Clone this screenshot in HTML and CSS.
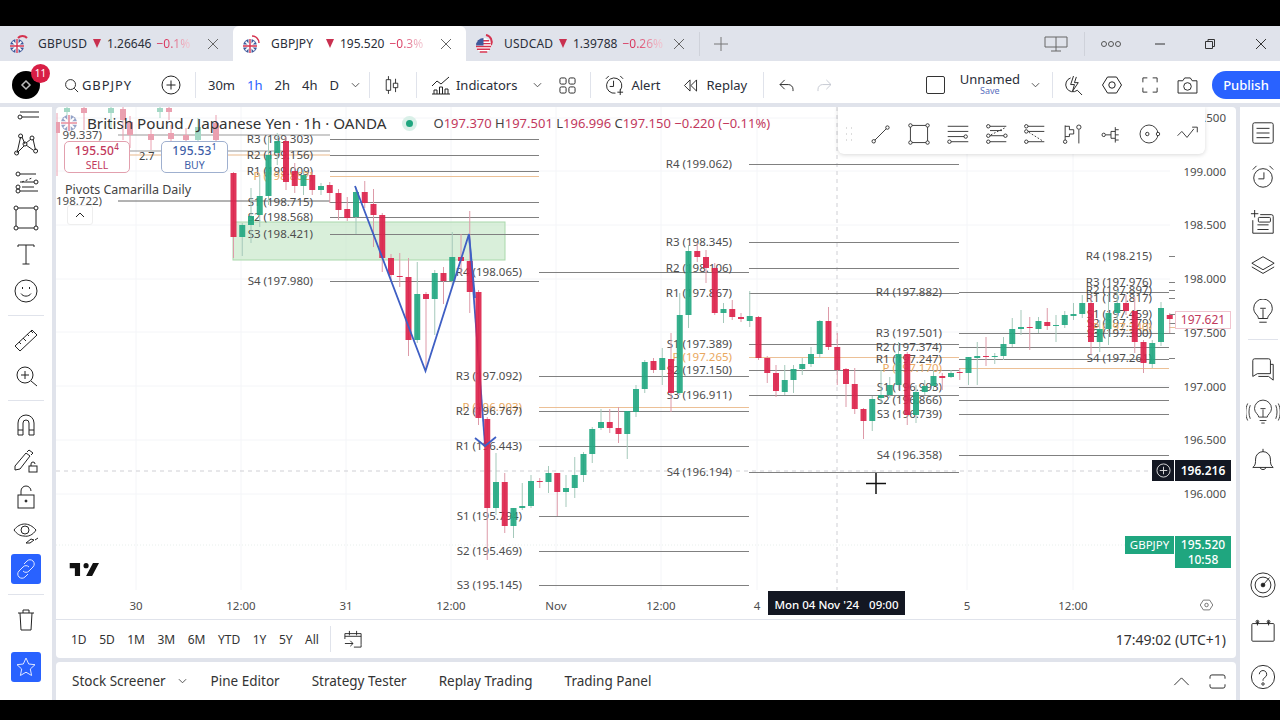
FILE: index.html
```html
<!DOCTYPE html>
<html lang="en">
<head>
    <meta charset="UTF-8">
    <title>GBPJPY 195.520</title>
    <link rel="stylesheet" href="styles.css">
</head>
<body>
    <!-- shared flags -->
    <svg class="defs" width="0" height="0">
        <symbol id="flagUk" viewBox="0 0 16 16">
            <circle cx="8" cy="8" r="8" fill="#3f5a9c"/>
            <path d="M3 3l10 10M13 3L3 13" stroke="#fff" stroke-width="2"/>
            <path d="M8 0v16M0 8h16" stroke="#fff" stroke-width="3.5"/>
            <path d="M8 0v16M0 8h16" stroke="#d5334f" stroke-width="1.6"/>
        </symbol>
        <symbol id="flagUs" viewBox="0 0 16 16">
            <circle cx="8" cy="8" r="8" fill="#fff"/>
            <path d="M2 3h12M0.500 6h15M0 9h16M1 12h14M4 15h8" stroke="#d5334f" stroke-width="1.500"/>
            <path d="M8 0a8 8 0 0 0-8 8h8z" fill="#3f5a9c"/>
        </symbol>
    </svg>

    <div class="black-bar"></div>

    <div class="tabs">
        <div class="tab">
            <svg class="flags" viewBox="0 0 20 20"><path d="M9 4a6 6 0 0 1 9 0" fill="none" stroke="#d5334f" stroke-width="2"/><use href="#flagUk" x="1" y="5" width="14" height="14"/></svg>
            <span class="sym">GBPUSD</span><span class="arrow"></span><span>1.26646</span><span class="chg">−0.1%</span>
            <svg class="close" viewBox="0 0 12 12"><path d="M1 1l10 10M11 1L1 11"/></svg>
        </div>
        <div class="tab active">
            <svg class="flags" viewBox="0 0 20 20"><path d="M10 2a7 7 0 0 1 7 7" fill="none" stroke="#d5334f" stroke-width="1.500"/><use href="#flagUk" x="1" y="5" width="14" height="14"/></svg>
            <span class="sym">GBPJPY</span><span class="arrow"></span><span>195.520</span><span class="chg">−0.3%</span>
            <svg class="close" viewBox="0 0 12 12"><path d="M1 1l10 10M11 1L1 11"/></svg>
        </div>
        <div class="tab">
            <svg class="flags" viewBox="0 0 20 20"><path d="M11 1a7 7 0 0 1 5 10" fill="none" stroke="#d5334f" stroke-width="2"/><use href="#flagUs" x="1" y="4" width="15" height="15"/></svg>
            <span class="sym">USDCAD</span><span class="arrow"></span><span>1.39788</span><span class="chg">−0.26%</span>
            <svg class="close" viewBox="0 0 12 12"><path d="M1 1l10 10M11 1L1 11"/></svg>
        </div>
        <div class="tab-sep"></div>
        <svg class="new-tab" viewBox="0 0 14 14"><path d="M7 0v14M0 7h14"/></svg>
        <div class="window-btns">
            <svg class="win split" viewBox="0 0 24 16"><path d="M1 1h22v10H1zM12 1v14M7 15h10"/></svg>
            <div class="tab-sep win-sep"></div>
            <svg class="win dots" viewBox="0 0 22 8"><circle cx="4" cy="4" r="2.500"/><circle cx="11" cy="4" r="2.500"/><circle cx="18" cy="4" r="2.500"/></svg>
            <svg class="win minimize" viewBox="0 0 12 12"><path d="M1 6h10"/></svg>
            <svg class="win restore" viewBox="0 0 12 12"><path d="M1.500 3.500h7v7h-7zM4 3.500v-2h6.500v7h-2"/></svg>
            <svg class="win shut" viewBox="0 0 12 12"><path d="M1 1l10 10M11 1L1 11"/></svg>
        </div>
    </div>

    <div class="toolbar">
        <div class="avatar">
            <svg viewBox="0 0 12 12"><path d="M6 2l4 4-4 4-4-4z" fill="none" stroke="#bbb" stroke-width="1.500"/></svg>
            <span class="badge">11</span>
        </div>
        <div class="symbol">
            <svg viewBox="0 0 16 16"><circle cx="7" cy="7" r="5.300"/><path d="M11 11l4 4"/></svg>
            <span>GBPJPY</span>
        </div>
        <svg class="tb-icon plus" viewBox="0 0 20 20"><circle cx="10" cy="10" r="9"/><path d="M10 5.500v9M5.500 10h9"/></svg>
        <div class="sep sep-a"></div>
        <div class="intervals">
            <span>30m</span><span class="on">1h</span><span>2h</span><span>4h</span><span>D</span>
            <svg class="chev" viewBox="0 0 10 6"><path d="M1 1l4 4 4-4"/></svg>
        </div>
        <div class="sep sep-b"></div>
        <svg class="tb-icon bars" viewBox="0 0 18 22"><path d="M5 1v4M5 17v4M2.500 5h5v12h-5zM13 4v5M13 14v5M10.500 9h5v5h-5z"/></svg>
        <div class="sep sep-c"></div>
        <div class="tb-btn indicators">
            <svg viewBox="0 0 20 20"><path d="M1 11l5-5 4 3 8-7M1 19h18M3 19v-4h3v4M8.500 19v-7h3v7M14 19v-5h3v5"/></svg>
            <span>Indicators</span>
        </div>
        <svg class="chev chev-ind" viewBox="0 0 10 6"><path d="M1 1l4 4 4-4"/></svg>
        <svg class="tb-icon layout" viewBox="0 0 18 18"><rect x="1" y="1" width="6.500" height="6.500" rx="1.500"/><rect x="10.500" y="1" width="6.500" height="6.500" rx="1.500"/><rect x="1" y="10.500" width="6.500" height="6.500" rx="1.500"/><rect x="10.500" y="10.500" width="6.500" height="6.500" rx="1.500"/></svg>
        <div class="sep sep-d"></div>
        <div class="tb-btn alert">
            <svg viewBox="0 0 22 22"><path d="M17 16a8 8 0 1 0-5 3M10 6v6H6M2 4l3-3M17 1l3 3M17 15v6M14 18h6"/></svg>
            <span>Alert</span>
        </div>
        <div class="tb-btn replay">
            <svg viewBox="0 0 16 14"><path d="M7.500 1L1.500 7l6 6zM14.500 1l-6 6 6 6z"/></svg>
            <span>Replay</span>
        </div>
        <div class="sep sep-e"></div>
        <svg class="tb-icon undo" viewBox="0 0 16 14"><path d="M6 1L1 6l5 5M1 6h9a5 5 0 0 1 5 5v2"/></svg>
        <svg class="tb-icon redo" viewBox="0 0 16 14"><path d="M10 1l5 5-5 5M15 6H6a5 5 0 0 0-5 5v2"/></svg>

        <div class="tb-right">
            <div class="check"></div>
            <div class="layout-name"><span>Unnamed</span><small>Save</small></div>
            <svg class="chev chev-name" viewBox="0 0 10 6"><path d="M1 1l4 4 4-4"/></svg>
            <div class="sep sep-f"></div>
            <svg class="tb-icon flash" viewBox="0 0 20 22"><path d="M7 3a7.500 7.500 0 1 0 7 13l5 5M10 1L7 10h4l-2 7 6-9h-4l2-6"/></svg>
            <svg class="tb-icon hex" viewBox="0 0 20 20"><path d="M5.500 2h9l5 8-5 8h-9l-5-8z"/><circle cx="10" cy="10" r="3.200"/></svg>
            <svg class="tb-icon full" viewBox="0 0 18 18"><path d="M1 6V1h5M12 1h5v5M17 12v5h-5M6 17H1v-5"/></svg>
            <svg class="tb-icon camera" viewBox="0 0 22 18"><path d="M1 4h5l2-3h6l2 3h5v13H1z"/><circle cx="11" cy="10" r="4"/></svg>
            <button class="publish">Publish</button>
        </div>
    </div>

    <div class="workspace">
        <div class="left-bar">
            <div class="tool first"><svg viewBox="0 0 28 28"><path d="M8 9h19M10 14h17"/><circle cx="8" cy="14" r="2"/></svg></div>
            <div class="tool"><svg viewBox="0 0 28 28"><path d="M5 22L8.600 6M10 6l3 7M14 12l5-4M21 8l2.500 11M21 19l-7-5M12 15l-6 6"/><circle cx="8.600" cy="5" r="2"/><circle cx="20" cy="7" r="2"/><circle cx="13" cy="13" r="2"/><circle cx="23.600" cy="20" r="2"/><circle cx="4.600" cy="22" r="2"/></svg></div>
            <div class="tool wide"><svg viewBox="0 0 28 28"><path d="M8 6h16M10 19h12M8 23h18"/><path d="M10 14l10-4" stroke-dasharray="2 2"/><circle cx="6" cy="6" r="2"/><circle cx="6" cy="19" r="2"/><circle cx="24" cy="14" r="2"/><circle cx="6" cy="23" r="2"/><path d="M8 14h14"/></svg></div>
            <div class="tool slim"><svg viewBox="0 0 28 28"><path d="M6 4h16M24 6v16M6 24h16M4 6v16"/><circle cx="4" cy="4" r="2"/><circle cx="24" cy="4" r="2"/><circle cx="4" cy="24" r="2"/><circle cx="24" cy="24" r="2"/></svg></div>
            <div class="tool wide"><svg viewBox="0 0 28 28"><path d="M6 7V5h16v2M14 5v19M10.500 24h7"/></svg></div>
            <div class="tool wide"><svg viewBox="0 0 28 28"><circle cx="14" cy="14" r="11"/><path d="M9 16.500c2 3.500 8 3.500 10 0"/><path d="M10.500 10v2M17.500 10v2"/></svg></div>
            <div class="tool-line line-a"></div>
            <div class="tool"><svg viewBox="0 0 28 28"><path d="M3 20L20 4l5 5L8 25zM7 16l2 2M11 12l3 3M15 8l2 2M19 5l2 2"/></svg></div>
            <div class="tool"><svg viewBox="0 0 28 28"><circle cx="13" cy="13" r="8"/><path d="M19 19l6 5M13 9v8M9 13h8"/></svg></div>
            <div class="tool-line line-a"></div>
            <div class="tool"><svg viewBox="0 0 28 28"><path d="M6 24V12a8 8 0 0 1 16 0v12h-5V12a3 3 0 0 0-6 0v12zM6 19h5M17 19h5"/></svg></div>
            <div class="tool"><svg viewBox="0 0 28 28"><path d="M3 19L14 6l4 3L8 22l-5 1zM15 5l2-2 4 3-2 2"/><rect x="17" y="19" width="8" height="6"/><path d="M19 19v-2a2 2 0 0 1 4 0"/></svg></div>
            <div class="tool"><svg viewBox="0 0 28 28"><rect x="6" y="12" width="16" height="13"/><path d="M9 12V8a5 5 0 0 1 10 0"/><circle cx="14" cy="18" r="1" fill="#222"/></svg></div>
            <div class="tool"><svg viewBox="0 0 28 28"><path d="M2 11c6-8 15-8 22 0-3 5-8 7-12 6-4 0-7-2-10-6z"/><circle cx="13" cy="11" r="4"/><path d="M14 24l5-4 3 1-4 3zM23 21l3-2"/></svg></div>
            <div class="tool"><span class="blue-tool"><svg viewBox="0 0 22 22"><path d="M9 6l3-3a4 4 0 0 1 6 6l-4 4a4 4 0 0 1-6 0M13 16l-3 3a4 4 0 0 1-6-6l4-4a4 4 0 0 1 6 0"/></svg></span></div>
            <div class="tool-line line-b"></div>
            <div class="tool"><svg viewBox="0 0 28 28"><path d="M6 8h16M11 8V5h6v3M8 8l1 17h10l1-17"/></svg></div>
            <div class="tool star-tool"><span class="blue-tool"><svg viewBox="0 0 22 22"><path d="M11 2l2.700 6 6.300.700-4.700 4.300 1.300 6.500-5.600-3.300-5.600 3.300 1.300-6.500L2 8.700 8.300 8z"/></svg></span></div>
        </div>

        <div class="center">
            <div class="chart-panel">
                <div class="chart">
                    <svg id="chartSvg" viewBox="56 107 1180 512" width="1180" height="512"></svg>

                    <div class="legend">
                        <svg class="legend-flag" viewBox="0 0 16 16"><use href="#flagUk"/></svg>
                        <span class="legend-title">British Pound / Japanese Yen · 1h · OANDA</span>
                        <span class="live-dot"></span>
                        <span class="ohlc">
                            O<b>197.370</b> H<b>197.501</b> L<b>196.996</b> C<b>197.150</b> <b>−0.220 (−0.11%)</b>
                        </span>
                    </div>
                    <div class="quote sell"><strong>195.50<sup>4</sup></strong><span>SELL</span></div>
                    <div class="spread">2.7</div>
                    <div class="quote buy"><strong>195.53<sup>1</sup></strong><span>BUY</span></div>
                    <div class="study">Pivots Camarilla Daily</div>
                    <div class="collapse"><svg viewBox="0 0 10 6"><path d="M1 5l4-4 4 4"/></svg></div>

                    <svg class="tv-logo" viewBox="0 6 36 15"><path d="M14 6H2v6h6v9h6V6zm14 15h-7l8-15h7l-8 15zm-7-9a3 3 0 1 0 0-6 3 3 0 0 0 0 6z"/></svg>

                    <div class="draw-bar">
                        <svg class="grip" viewBox="0 0 10 16"><path d="M2 2h1M7 2h1M2 8h1M7 8h1M2 14h1M7 14h1"/></svg>
                        <svg viewBox="0 0 28 28"><path d="M7 21L20 8"/><circle cx="5.500" cy="22.500" r="2"/><circle cx="21.500" cy="6.500" r="2"/></svg>
                        <svg viewBox="0 0 28 28"><path d="M6 4h16M24 6v16M6 24h16M4 6v16"/><circle cx="4" cy="4" r="2"/><circle cx="24" cy="4" r="2"/><circle cx="4" cy="24" r="2"/><circle cx="24" cy="24" r="2"/></svg>
                        <svg viewBox="0 0 28 28"><path d="M2 5h24M2 11h24M2 17h19M6 23h20"/><circle cx="23" cy="17" r="2"/><circle cx="4" cy="23" r="2"/></svg>
                        <svg viewBox="0 0 28 28"><path d="M7 5h19M7 16h16M7 23h19"/><path d="M8 15L24 7" stroke-dasharray="2 2"/><circle cx="5" cy="5" r="2"/><circle cx="5" cy="16" r="2"/><circle cx="25" cy="16" r="2"/><circle cx="5" cy="23" r="2"/><path d="M7 10h14"/></svg>
                        <svg viewBox="0 0 28 28"><path d="M7 5h19M7 11h19M7 23h19"/><path d="M8 12l16 10" stroke-dasharray="2 2"/><circle cx="5" cy="5" r="2"/><circle cx="5" cy="11" r="2"/><circle cx="5" cy="23" r="2"/></svg>
                        <svg viewBox="0 0 28 28"><path d="M6 4v17M6 5h5v4h5v5h-5v3H6M22 9v16"/><circle cx="6" cy="23" r="2"/><circle cx="22" cy="6" r="2.500"/></svg>
                        <svg viewBox="0 0 28 28"><path d="M8 15h6M14 11h5M14 19h5M14 11v8M19 6v18M19 9h4M19 21h4M19 15h4"/><circle cx="5.500" cy="15" r="2"/></svg>
                        <svg viewBox="0 0 28 28"><circle cx="14" cy="14" r="10.500"/><circle cx="12" cy="14" r="2"/><circle cx="24.500" cy="14" r="2" fill="#fff"/></svg>
                        <svg viewBox="0 0 28 28"><path d="M3 16l5-5 6 7 8-10"/><path d="M20 6h6v6"/></svg>
                    </div>

                    <!-- price scale tags -->
                    <div class="tag last-close">197.621</div>
                    <div class="tag cross-plus"><svg viewBox="0 0 16 16"><circle cx="8" cy="8" r="7"/><path d="M8 4v8M4 8h8"/></svg></div>
                    <div class="tag cross-price">196.216</div>
                    <div class="tag sym-tag">GBPJPY</div>
                    <div class="tag price-tag">195.520<br>10:58</div>
                    <div class="time-tip">Mon 04 Nov '24<span>09:00</span></div>
                    <svg class="axis-gear" viewBox="0 0 20 20"><path d="M5.500 3h9l4.500 7-4.500 7h-9L1 10z"/><circle cx="10" cy="10" r="2.500"/></svg>
                </div>

                <div class="ranges">
                    <span>1D</span><span>5D</span><span>1M</span><span>3M</span><span>6M</span><span>YTD</span><span>1Y</span><span>5Y</span><span>All</span>
                    <div class="range-sep"></div>
                    <svg viewBox="0 0 20 20"><path d="M19 16V4H1v6M1 7h18M6 1v5M14 1v5M11 19h8v-3M1 15h9M7 12l3 3-3 3"/></svg>
                    <div class="clock">17:49:02 (UTC+1)</div>
                </div>
            </div>

            <div class="bottom-panel">
                <span class="panel-tab screener">Stock Screener</span>
                <svg class="chev" viewBox="0 0 10 6"><path d="M1 1l4 4 4-4"/></svg>
                <span class="panel-tab pine">Pine Editor</span>
                <span class="panel-tab">Strategy Tester</span>
                <span class="panel-tab">Replay Trading</span>
                <span class="panel-tab">Trading Panel</span>
                <svg class="panel-up" viewBox="0 0 18 10"><path d="M1 9l8-8 8 8"/></svg>
                <svg class="panel-max" viewBox="0 0 18 16"><path d="M1 5V3a2 2 0 0 1 2-2h12a2 2 0 0 1 2 2v2M1 11v2a2 2 0 0 0 2 2h12a2 2 0 0 0 2-2v-2"/></svg>
            </div>
        </div>

        <div class="right-bar">
            <div></div>
            <svg viewBox="0 0 28 28"><rect x="3" y="3" width="22" height="22" rx="2"/><path d="M7 9h14M7 14h14M7 19h14"/></svg>
            <svg viewBox="0 0 28 28"><circle cx="14" cy="15" r="10"/><path d="M15 9v7H9M3 6l4-4M25 6l-4-4"/></svg>
            <svg viewBox="0 0 28 28"><path d="M1 4h8M5 0v8M3 11v14h22V7a2 2 0 0 0-2-2H11M8 16h12M8 21h12"/><rect x="9" y="8" width="13" height="5" rx="1"/></svg>
            <svg viewBox="0 0 28 28"><path d="M14 4l12 7-12 7-12-7zM2 15l12 7 12-7"/></svg>
            <svg viewBox="0 0 28 28"><path d="M9 21c0-4-5-5-5-11a10 10 0 0 1 20 0c0 6-5 7-5 11zM10 25h8M14 11v10M11 10h6"/></svg>
            <div class="right-line"></div>
            <svg viewBox="0 0 28 28"><path d="M3 5a2 2 0 0 1 2-2h15a2 2 0 0 1 2 2v14H8l-5 3zM22 9h3v17l-5-4H9"/></svg>
            <svg class="wide-icon" viewBox="0 0 40 28"><path d="M15 20c0-3-5-5-5-10a10 10 0 0 1 20 0c0 5-5 7-5 10zM16 24h8M18 27h4M20 11v9M17 10h6M5 6c-2 5-2 11 0 16M2 4c-3 6-3 14 0 20M35 6c2 5 2 11 0 16M38 4c3 6 3 14 0 20"/></svg>
            <svg viewBox="0 0 28 28"><path d="M3 22c3-2 3-5 3-9a8 8 0 0 1 16 0c0 4 0 7 3 9zM14 2v3M11 22c0 3 6 3 6 0"/></svg>
            <div></div>
            <svg viewBox="0 0 28 28"><circle cx="14" cy="14" r="13"/><circle cx="14" cy="14" r="8.500"/><circle cx="14" cy="14" r="2" fill="#222"/><path d="M14 14l7-8"/></svg>
            <svg viewBox="0 0 28 28"><rect x="2" y="6" width="24" height="19" rx="1"/><path d="M8 3v5M20 3v5"/><circle cx="8" cy="4" r="1.500"/><circle cx="20" cy="4" r="1.500"/></svg>
            <svg viewBox="0 0 28 28"><circle cx="14" cy="14" r="12.500"/><path d="M10 11a4 4 0 1 1 6 3.500c-1.500 1-2 1.500-2 3.500"/><circle cx="14" cy="21.500" r="1.300"/></svg>
            <div></div>
        </div>
    </div>

    <div class="black-bar bottom"></div>

    <script src="script.js"></script>
</body>
</html>
```
FILE: styles.css
```css
* {
    box-sizing: border-box;
}

body {
    margin: 0;
    width: 1280px;
    height: 720px;
    overflow: hidden;
    font-family: "Noto Sans", Arial, sans-serif;
    color: #2a2e39;
    background: #e0e3eb;
}

svg {
    fill: none;
    stroke: #222;
    stroke-width: 1;
    flex-shrink: 0;
}

.defs {
    position: absolute;
}

.black-bar {
    height: 26px;
    background: #000;
}

.black-bar.bottom {
    height: 20px;
}

/* Browser style tabs */
.tabs {
    height: 35px;
    display: flex;
    align-items: center;
    background: #e0e3eb;
    font-size: 12px;
    color: #2a2e39;
}

.tab {
    width: 233px;
    height: 35px;
    display: flex;
    align-items: center;
    padding-left: 9px;
    border-radius: 6px 6px 0 0;
}

.tab.active {
    background: #fff;
}

.flags {
    width: 20px;
    height: 20px;
    stroke: none;
}

.sym {
    width: 50px;
    margin-left: 9px;
    letter-spacing: .2px;
}

.arrow {
    width: 0;
    height: 0;
    margin: 0 6px 0 5px;
    border-left: 4px solid transparent;
    border-right: 4px solid transparent;
    border-top: 9px solid #c9304f;
}

.chg {
    margin-left: 5px;
    background: linear-gradient(90deg, #d8325a 30%, #f0c0cc 90%);
    -webkit-background-clip: text;
    background-clip: text;
    color: transparent;
}

.close {
    width: 12px;
    height: 12px;
    margin-left: auto;
    margin-right: 14px;
    stroke: #666;
}

.tab-sep {
    width: 1px;
    height: 24px;
    background: #cfd2da;
}

.new-tab {
    width: 14px;
    height: 14px;
    margin-left: 14px;
    stroke: #777;
}

.window-btns {
    margin-left: auto;
    display: flex;
    align-items: center;
}

.win {
    stroke: #333;
}

.split {
    width: 24px;
    height: 16px;
    stroke: #666;
    margin-right: 16px;
}

.win-sep {
    margin-right: 15px;
}

.dots {
    width: 22px;
    height: 8px;
    margin-right: 32px;
    stroke: #555;
}

.minimize {
    width: 12px;
    height: 12px;
    margin-right: 38px;
}

.restore {
    width: 12px;
    height: 12px;
    margin-right: 39px;
}

.shut {
    width: 12px;
    height: 12px;
    margin-right: 13px;
}

/* Main toolbar */
.toolbar {
    height: 42px;
    padding-top: 6px;
    display: flex;
    align-items: center;
    background: #fff;
    font-size: 13px;
    position: relative;
}

.avatar {
    width: 28px;
    height: 28px;
    margin-left: 12px;
    border-radius: 50%;
    background: #000;
    position: relative;
    display: flex;
    align-items: center;
    justify-content: center;
}

.avatar svg {
    width: 12px;
    height: 12px;
}

.badge {
    position: absolute;
    top: -7px;
    right: -10px;
    width: 19px;
    height: 19px;
    border-radius: 50%;
    background: #d81e45;
    color: #fff;
    font-size: 10px;
    line-height: 19px;
    text-align: center;
}

.symbol {
    display: flex;
    align-items: center;
    gap: 3px;
    margin-left: 24px;
    letter-spacing: .9px;
}

.symbol svg {
    width: 15px;
    height: 15px;
}

.tb-icon {
    flex-shrink: 0;
}

.plus {
    width: 20px;
    height: 20px;
    margin-left: 29px;
}

.sep {
    width: 1px;
    height: 26px;
    background: #e0e3eb;
}

.sep-a {
    margin-left: 14px;
}

.intervals {
    display: flex;
    align-items: center;
    gap: 12px;
    margin-left: 12px;
}

.intervals .on {
    color: #2962ff;
}

.chev {
    width: 9px;
    height: 6px;
    stroke: #444;
}

.sep-b {
    margin-left: 9px;
}

.bars {
    width: 16px;
    height: 20px;
    margin-left: 14px;
}

.sep-c {
    margin-left: 16px;
}

.tb-btn {
    display: flex;
    align-items: center;
}

.indicators {
    margin-left: 14px;
    gap: 5px;
}

.indicators svg {
    width: 20px;
    height: 20px;
}

.chev-ind {
    margin-left: 16px;
}

.layout {
    width: 17px;
    height: 17px;
    margin-left: 17px;
}

.sep-d {
    margin-left: 14px;
}

.alert {
    margin-left: 13px;
    gap: 6px;
}

.alert svg {
    width: 21px;
    height: 21px;
}

.replay {
    margin-left: 23px;
    gap: 8px;
}

.replay svg {
    width: 15px;
    height: 13px;
}

.sep-e {
    margin-left: 16px;
}

.undo {
    width: 15px;
    height: 13px;
    margin-left: 15px;
}

.redo {
    width: 15px;
    height: 13px;
    margin-left: 23px;
    stroke: #c4c7d0;
}

.tb-right {
    margin-left: auto;
    display: flex;
    align-items: center;
}

.check {
    width: 19px;
    height: 18px;
    border: 1px solid #333;
    border-radius: 2px;
}

.layout-name {
    margin-left: 15px;
    display: flex;
    flex-direction: column;
    align-items: center;
    line-height: 12px;
}

.layout-name small {
    font-size: 9px;
    color: #5a6fc0;
}

.chev-name {
    margin-left: 11px;
}

.sep-f {
    margin-left: 12px;
}

.flash {
    width: 19px;
    height: 21px;
    margin-left: 11px;
}

.hex {
    width: 20px;
    height: 20px;
    margin-left: 19px;
}

.full {
    width: 16px;
    height: 16px;
    margin-left: 20px;
}

.camera {
    width: 21px;
    height: 17px;
    margin-left: 19px;
}

.publish {
    width: 68px;
    height: 28px;
    margin-left: 14px;
    border: none;
    border-radius: 14px 0 0 14px;
    background: #2962ff;
    color: #fff;
    font-family: inherit;
    font-size: 13px;
    font-weight: 500;
}

/* Everything under the toolbar */
.workspace {
    height: 597px;
    padding-top: 4px;
    display: flex;
    background: #e0e3eb;
}

.left-bar {
    width: 52px;
    height: 593px;
    background: #fff;
    overflow: hidden;
}

.tool {
    height: 36px;
    display: flex;
    align-items: center;
    justify-content: center;
}

.tool svg {
    width: 28px;
    height: 28px;
}

.tool.first {
    height: 20px;
}

.tool.wide {
    height: 37px;
}

.tool.slim {
    height: 35px;
}

.tool-line {
    height: 1px;
    margin: 6px 8px;
    background: #e0e3eb;
}

.tool-line.line-b {
    margin: 7px 8px 6px;
}

.star-tool {
    margin-top: 12px;
}

.blue-tool {
    width: 30px;
    height: 30px;
    border-radius: 3px;
    background: #2962ff;
    display: flex;
    align-items: center;
    justify-content: center;
}

.tool .blue-tool svg {
    width: 22px;
    height: 22px;
    stroke: #dfe7ff;
}

.center {
    width: 1180px;
    margin-left: 4px;
    display: flex;
    flex-direction: column;
    gap: 4px;
}

.chart-panel {
    height: 551px;
    background: #fff;
    border-radius: 4px;
    display: flex;
    flex-direction: column;
}

.chart {
    height: 512px;
    position: relative;
    overflow: hidden;
}

#chartSvg {
    display: block;
    stroke: none;
}

#chartSvg text {
    font-size: 11.500px;
    fill: #4d4d4d;
    stroke: none;
}

#chartSvg rect.candle {
    opacity: .9;
}

.legend {
    position: absolute;
    top: 5px;
    left: 5px;
    display: flex;
    align-items: center;
    height: 22px;
}

.legend-flag {
    width: 16px;
    height: 16px;
    stroke: none;
    opacity: .55;
}

.legend-title {
    margin-left: 10px;
    font-size: 15.200px;
    color: #333;
}

.live-dot {
    width: 7px;
    height: 7px;
    margin-left: 20px;
    border-radius: 50%;
    background: #1fa67f;
    box-shadow: 0 0 0 4px #d9f0e8;
}

.ohlc {
    margin-left: 20px;
    font-size: 13px;
    color: #444;
}

.ohlc b {
    font-weight: 400;
    color: #c2395d;
}

.quote {
    position: absolute;
    top: 34px;
    height: 32px;
    border: 1px solid #e2a0ae;
    border-radius: 5px;
    background: #fff;
    display: flex;
    flex-direction: column;
    align-items: center;
    font-size: 12px;
    line-height: 14px;
    padding-top: 2px;
    color: #c2395d;
}

.quote strong {
    font-weight: 500;
    letter-spacing: .3px;
}

.quote sup {
    font-size: 8px;
    line-height: 0;
}

.quote span {
    font-size: 10.500px;
}

.sell {
    left: 8px;
    width: 66px;
}

.buy {
    left: 105px;
    width: 67px;
    border-color: #9fb0cf;
    color: #3f5fa8;
}

.spread {
    position: absolute;
    top: 41px;
    left: 83px;
    font-size: 11px;
    color: #444;
}

.study {
    position: absolute;
    top: 74px;
    left: 9px;
    font-size: 12.500px;
    color: #444;
}

.collapse {
    position: absolute;
    top: 98px;
    left: 11px;
    width: 26px;
    height: 20px;
    border: 1px solid #eee;
    border-radius: 3px;
    background: rgba(255, 255, 255, .7);
    display: flex;
    align-items: center;
    justify-content: center;
}

.collapse svg {
    width: 10px;
    height: 6px;
}

.tv-logo {
    position: absolute;
    left: 12px;
    top: 455px;
    width: 31px;
    height: 15px;
    fill: #111;
    stroke: none;
}

/* Floating favourite drawings */
.draw-bar {
    position: absolute;
    top: 0;
    left: 782px;
    width: 367px;
    height: 47px;
    padding: 6px 0 0 6px;
    display: flex;
    align-items: center;
    background: #fff;
    border-radius: 0 0 6px 6px;
    box-shadow: 0 1px 4px rgba(0, 0, 0, .15);
}

.draw-bar svg {
    width: 24px;
    height: 24px;
    margin-right: 14.250px;
}

.draw-bar .grip {
    width: 10px;
    height: 16px;
    margin-right: 15px;
    stroke: #bbb;
}

.tag {
    position: absolute;
    left: 1119px;
    width: 56px;
    font-size: 12px;
    color: #fff;
    text-align: center;
}

.last-close {
    top: 204px;
    height: 18px;
    line-height: 16px;
    background: #fff;
    border: 1px solid #f0c4cf;
    color: #c2395d;
}

.cross-plus {
    top: 353px;
    left: 1096px;
    width: 22px;
    height: 21px;
    background: #131722;
    display: flex;
    align-items: center;
    justify-content: center;
}

.cross-plus svg {
    width: 15px;
    height: 15px;
    stroke: #ddd;
}

.cross-price {
    top: 353px;
    height: 21px;
    line-height: 21px;
    background: #131722;
    font-weight: 600;
}

.sym-tag {
    top: 429px;
    left: 1069px;
    width: 49px;
    height: 18px;
    line-height: 18px;
    background: #1fa67f;
    font-size: 11.500px;
}

.price-tag {
    top: 429px;
    height: 32px;
    line-height: 15px;
    padding-top: 1px;
    background: #1fa67f;
    font-weight: 500;
}

.time-tip {
    position: absolute;
    left: 712px;
    top: 484px;
    width: 137px;
    height: 24px;
    line-height: 27px;
    background: #131722;
    color: #fff;
    font-size: 11.500px;
    font-weight: 500;
    text-align: center;
}

.time-tip span {
    margin-left: 10px;
}

.axis-gear {
    position: absolute;
    left: 1143px;
    top: 491px;
    width: 15px;
    height: 14px;
    stroke: #444;
}

/* Range row under the chart */
.ranges {
    height: 39px;
    display: flex;
    align-items: center;
    padding-left: 15px;
    border-top: 1px solid #e0e3eb;
    font-size: 12px;
    gap: 12.500px;
    color: #333;
}

.range-sep {
    width: 1px;
    height: 26px;
    margin-left: -1.500px;
    background: #e0e3eb;
}

.ranges svg {
    width: 18px;
    height: 18px;
    margin-left: 1px;
}

.clock {
    margin-left: auto;
    margin-right: 10px;
    font-size: 14px;
}

.bottom-panel {
    flex: 1;
    display: flex;
    align-items: center;
    padding-left: 16px;
    background: #fff;
    border-radius: 4px 4px 0 0;
    font-size: 13.500px;
    color: #333;
}

.panel-tab {
    margin-left: 32px;
}

.panel-tab.screener {
    margin-left: 0;
}

.bottom-panel .chev {
    margin-left: 12px;
}

.panel-tab.pine {
    margin-left: 24px;
}

.panel-up {
    width: 17px;
    height: 9px;
    margin-left: auto;
}

.panel-max {
    width: 17px;
    height: 15px;
    margin-left: 19px;
    margin-right: 10px;
}

.right-bar {
    width: 40px;
    height: 593px;
    margin-left: 4px;
    padding-left: 6px;
    background: #fff;
    display: grid;
    grid-template-rows: 3px 45px 44px 47px 39px 54px 1px 57px 30px 66px 1fr 34px 58px 34px 6px;
    justify-items: center;
    align-items: center;
}

.right-bar svg {
    width: 26px;
    height: 26px;
}

.right-bar .wide-icon {
    width: 34px;
}

.right-line {
    width: 30px;
    height: 1px;
    background: #e0e3eb;
}
```
FILE: script.js
```js
// chart is drawn with screenshot coordinates, the viewBox handles the offset
const svg = document.getElementById('chartSvg');
const NS = 'http://www.w3.org/2000/svg';

const RED = '#dc1f48';
const GREEN = '#1fa67f';
const RED_WICK = '#dd9aa8';
const GREEN_WICK = '#a5c9bb';

function add(name, attrs, text) {
    const el = document.createElementNS(NS, name);
    for (const key in attrs) {
        el.setAttribute(key, attrs[key]);
    }
    if (text) {
        el.textContent = text;
    }
    svg.appendChild(el);
    return el;
}

function line(x1, y1, x2, y2, stroke, extra) {
    add('line', Object.assign({ x1, y1, x2, y2, stroke, 'stroke-width': 1 }, extra));
}

// faint grid
[136, 241, 346, 451, 556, 661, 757, 967, 1073].forEach(x => line(x, 107, x, 590, '#f4f5f8'));
[118, 171, 225, 279, 332, 386, 440, 494].forEach(y => line(56, y, 1170, y, '#f4f5f8'));

// crosshair and last price line
line(837, 107, 837, 590, '#cfcfd4', { 'stroke-dasharray': '4 4' });
line(56, 471, 1152, 471, '#cfcfd4', { 'stroke-dasharray': '4 4' });
line(56, 545, 1125, 545, '#e8efec', { 'stroke-dasharray': '1 2' });

// supply zone
add('rect', { x: 233, y: 222, width: 272, height: 38, fill: '#c5e6c6', 'fill-opacity': .65, stroke: '#a9d8ab' });

// previous day pivots, only the tail of them is on screen
line(118, 135, 330, 135, '#999');
line(118, 151, 330, 151, '#999');
line(118, 155, 330, 155, '#e8b98c');
line(118, 201, 330, 201, '#666');
add('text', { x: 102, y: 139, 'text-anchor': 'end' }, '99.337)');
add('text', { x: 102, y: 205, 'text-anchor': 'end' }, '198.722)');

const pivotSets = [
    { end: 313, from: 330, to: 539, rows: [
        ['R3 (199.303)', 139], ['R2 (199.156)', 154.5], ['R1 (199.009)', 170.5], ['P (198.862)', 176, true],
        ['S1 (198.715)', 201.5], ['S2 (198.568)', 217], ['S3 (198.421)', 233.5], ['S4 (197.980)', 281]
    ] },
    { end: 522, from: 539, to: 749, rows: [
        ['R4 (198.065)', 271.5], ['R3 (197.092)', 376], ['P (196.903)', 407, true], ['R2 (196.767)', 410.5],
        ['R1 (196.443)', 445.5], ['S1 (195.794)', 515.5], ['S2 (195.469)', 550.5], ['S3 (195.145)', 585]
    ] },
    { end: 732, from: 749, to: 959, rows: [
        ['R4 (199.062)', 164], ['R3 (198.345)', 241.5], ['R2 (198.106)', 267.5], ['R1 (197.867)', 293],
        ['S1 (197.389)', 344], ['P (197.265)', 357, true], ['S2 (197.150)', 370], ['S3 (196.911)', 395], ['S4 (196.194)', 472]
    ] },
    { end: 942, from: 959, to: 1169, rows: [
        ['R4 (197.882)', 291.5], ['R3 (197.501)', 332.5], ['R2 (197.374)', 346.5], ['R1 (197.247)', 359],
        ['P (197.170)', 368, true], ['S1 (196.993)', 386.5], ['S2 (196.866)', 400], ['S3 (196.739)', 414], ['S4 (196.358)', 455]
    ] },
    { end: 1152, from: 1169, to: 1175, rows: [
        ['R4 (198.215)', 255.5], ['R3 (197.976)', 281.5], ['R2 (197.897)', 289.5], ['R1 (197.817)', 297.5],
        ['S1 (197.459)', 314], ['S2 (197.379)', 323], ['P (197.340)', 327, true], ['S3 (197.300)', 332.5], ['S4 (197.261)', 358]
    ] }
];

pivotSets.forEach(set => {
    set.rows.forEach(row => {
        const orange = row[2];
        line(set.from, Math.round(row[1]) + .5, set.to, Math.round(row[1]) + .5, orange ? '#ecc096' : '#808080');
        const label = add('text', { x: set.end, y: row[1] + 4, 'text-anchor': 'end' }, row[0]);
        if (orange) {
            label.style.fill = '#e9a860';
        }
    });
});

// older candles, washed out behind the legend
[
    [57, 113, 122, 133, 176, 'r'], [67, 107, 108, 112, 116, 'g'], [84, 107, 108, 113, 130, 'r'],
    [111, 107, 108, 113, 128, 'g'], [123, 107, 109, 120, 140, 'r'], [130, 116, 122, 135, 148, 'r'],
    [151, 128, 134, 140, 150, 'r'], [160, 107, 108, 112, 118, 'g'], [169, 107, 108, 112, 120, 'r'],
    [171, 125, 133, 139, 146, 'r'], [186, 128, 135, 140, 152, 'r'], [198, 118, 127, 140, 150, 'g'],
    [216, 115, 123, 140, 160, 'r']
].forEach(c => {
    const color = c[5] === 'r' ? '#eaa0b0' : '#a3d8c5';
    line(c[0], c[1], c[0], c[4], color);
    add('rect', { x: c[0] - 3, y: c[2], width: 6, height: c[3] - c[2], fill: color });
});

// last leg of the pattern runs behind the big red candle
line(469, 234, 485, 445, '#3f5fc4', { 'stroke-width': 1.8 });

// [wick top, body top, body bottom, wick bottom, colour], one hour apart
const candles = [
    [172, 173, 237, 258, 'r'], [223, 225, 237, 256, 'g'], [188, 216, 225, 243, 'g'], [175, 196, 215, 227, 'g'],
    [137, 155, 196, 205, 'g'], [133, 141, 153, 165, 'g'], [137, 141, 182, 190, 'r'], [163, 171, 186, 193, 'r'],
    [170, 175, 186, 195, 'g'], [172, 175, 190, 195, 'r'], [183, 186, 190, 195, 'g'], [182, 185, 193, 203, 'r'],
    [189, 193, 210, 220, 'r'], [197, 209, 218, 221, 'r'], [187, 192, 217, 234, 'g'], [181, 192, 203, 208, 'r'],
    [189, 204, 215, 247, 'r'], [213, 215, 258, 272, 'r'], [254, 258, 275, 280, 'r'], [253, 276, 277, 287, 'r'],
    [258, 277, 340, 356, 'r'], [262, 294, 340, 343, 'g'], [292, 294, 299, 369, 'r'], [270, 273, 299, 335, 'g'],
    [267, 273, 281, 304, 'r'], [232, 257, 281, 287, 'g'], [234, 257, 261, 275, 'r'], [211, 261, 292, 313, 'r'],
    [290, 292, 418, 425, 'r'], [417, 419, 508, 560, 'r'], [453, 482, 508, 515, 'g'], [473, 482, 526, 533, 'r'],
    [508, 508, 526, 538, 'g'], [483, 506, 508, 510, 'g'], [475, 481, 506, 508, 'g'], [478, 481, 482, 488, 'r'],
    [466, 473, 482, 493, 'g'], [473, 473, 492, 516, 'r'], [475, 488, 492, 507, 'g'], [457, 475, 488, 498, 'g'],
    [452, 454, 475, 482, 'g'], [427, 429, 454, 463, 'g'], [409, 422, 428, 430, 'g'], [409, 422, 428, 433, 'r'],
    [407, 428, 434, 443, 'r'], [411, 411, 434, 459, 'g'], [385, 389, 412, 417, 'g'], [360, 362, 389, 393, 'g'],
    [358, 361, 370, 373, 'r'], [348, 358, 370, 385, 'g'], [333, 359, 393, 412, 'r'], [293, 315, 393, 395, 'g'],
    [245, 251, 315, 328, 'g'], [243, 251, 257, 262, 'r'], [250, 257, 268, 283, 'r'], [263, 268, 313, 315, 'r'],
    [303, 309, 313, 323, 'g'], [300, 309, 317, 320, 'r'], [313, 317, 319, 322, 'r'], [291, 316, 321, 327, 'g'],
    [316, 317, 358, 360, 'r'], [356, 358, 373, 383, 'r'], [365, 373, 391, 397, 'r'], [365, 380, 392, 395, 'g'],
    [365, 369, 380, 393, 'g'], [358, 364, 369, 375, 'g'], [347, 354, 364, 367, 'g'], [320, 321, 354, 358, 'g'],
    [307, 321, 347, 350, 'r'], [333, 347, 370, 385, 'r'], [368, 369, 384, 407, 'r'], [368, 384, 409, 414, 'r'],
    [408, 409, 421, 439, 'r'], [396, 399, 421, 431, 'g'], [370, 395, 398, 403, 'g'], [377, 385, 395, 398, 'g'],
    [342, 354, 385, 390, 'g'], [352, 354, 415, 425, 'r'], [385, 392, 415, 423, 'g'], [380, 386, 392, 395, 'g'],
    [370, 376, 386, 390, 'g'], [373, 376, 378, 390, 'r'], [370, 373, 377, 378, 'g'], [368, 372, 373, 380, 'r'],
    [357, 357, 373, 385, 'g'], [342, 356, 358, 385, 'g'], [337, 356, 357, 366, 'r'], [353, 356, 357, 364, 'g'],
    [337, 344, 356, 360, 'g'], [318, 329, 344, 347, 'g'], [310, 327, 329, 335, 'g'], [317, 327, 328, 350, 'r'],
    [317, 321, 329, 333, 'g'], [308, 322, 326, 330, 'r'], [315, 325, 326, 342, 'g'], [311, 315, 325, 328, 'g'],
    [303, 314, 316, 320, 'g'], [295, 303, 314, 318, 'g'], [295, 303, 342, 355, 'r'], [320, 329, 342, 352, 'g'],
    [293, 313, 329, 345, 'g'], [290, 303, 313, 320, 'g'], [295, 303, 311, 315, 'r'], [297, 311, 342, 353, 'r'],
    [340, 342, 363, 373, 'r'], [340, 343, 364, 368, 'g'], [302, 308, 342, 346, 'g'], [313, 315, 319, 333, 'r']
];

candles.forEach((c, i) => {
    const x = 233.5 + i * 8.75;
    const isRed = c[4] === 'r';
    line(x, c[0], x, c[3], isRed ? RED_WICK : GREEN_WICK);
    add('rect', { class: 'candle', x: x - 3, y: c[1], width: 6, height: Math.max(c[2] - c[1], 1), fill: isRed ? RED : GREEN });
});

// hand drawn pattern on top
add('path', {
    d: 'M355 186L425.500 371L469 234L475 298M475 438L485 446L496 437',
    fill: 'none', stroke: '#3f5fc4', 'stroke-width': 1.8
});

// price scale
[['199.500', 118], ['199.000', 171.5], ['198.500', 225], ['198.000', 279], ['197.500', 332.5],
 ['197.000', 386.5], ['196.500', 440], ['196.000', 494]].forEach(p => {
    add('text', { x: 1226, y: p[1] + 4, 'text-anchor': 'end' }, p[0]);
});

// time scale
[['30', 136], ['12:00', 241], ['31', 346], ['12:00', 451], ['Nov', 556], ['12:00', 661], ['4', 757], ['5', 967], ['12:00', 1073]].forEach(t => {
    add('text', { x: t[1], y: 610, 'text-anchor': 'middle' }, t[0]);
});

// mouse cursor
line(876, 473, 876, 494, '#111', { 'stroke-width': 1.5 });
line(866, 483.500, 886, 483.500, '#111', { 'stroke-width': 1.5 });
```
